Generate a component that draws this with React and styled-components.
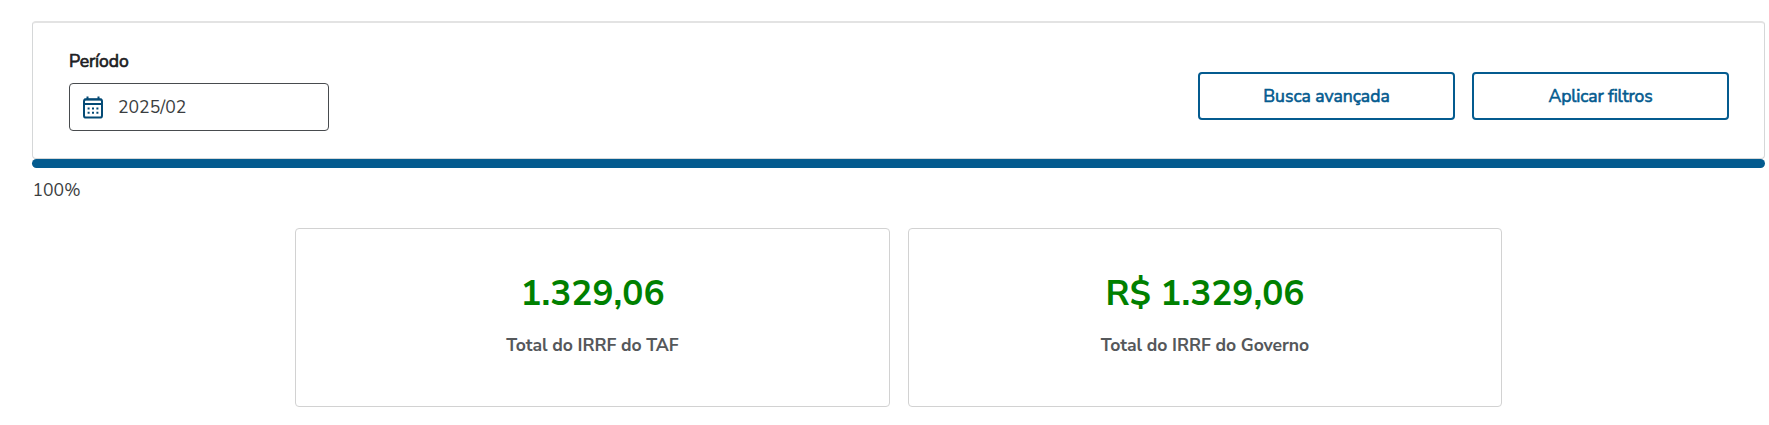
import React from "react";
import styled, { createGlobalStyle } from "styled-components";

const GlobalStyle = createGlobalStyle`
  *, *::before, *::after { box-sizing: border-box; }
  body {
    margin: 0;
    background: #fff;
    color: #3a3d40;
    font-family: "Nunito Sans", Nunito, Lato, "Open Sans", sans-serif;
    font-size: 17.6px;
    line-height: 24px;
  }
`;

const Page = styled.main`
  height: 425px;
  padding: 21px 4px 0 32px;
  overflow: hidden;
`;

const FilterPanel = styled.section`
  display: flex;
  justify-content: space-between;
  height: 138px;
  padding: 25px 35px 0 36px;
  border: 1px solid #d5d7d8;
  border-top: 2px solid #e3e3e3;
  border-radius: 4px;
`;

const Field = styled.label`
  display: flex;
  flex-direction: column;
  width: 260px;
  margin-top: -1px;
`;

const FieldLabel = styled.span`
  height: 34px;
  padding-top: 2px;
  color: #1d2023;
  letter-spacing: -0.1px;
  -webkit-text-stroke: 0.7px currentColor;
`;

const DateBox = styled.span`
  display: flex;
  align-items: center;
  gap: 15px;
  height: 48px;
  margin-top: 2px;
  padding-left: 13px;
  border: 1px solid #484b4e;
  border-radius: 4px;
`;

const DateText = styled.span`
  padding-bottom: 1px;
`;

const Actions = styled.div`
  display: flex;
  gap: 17px;
  padding-top: 24px;
`;

const Button = styled.button`
  width: 257px;
  height: 48px;
  padding: 0;
  border: 2px solid #045b8f;
  border-radius: 4px;
  background: #fff;
  color: #045b8f;
  font: inherit;
  letter-spacing: ${(p) => p.$track || "normal"};
  -webkit-text-stroke: 0.6px currentColor;
`;

const Progress = styled.div`
  height: 9px;
  border-radius: 5px;
  background: #045b8f;
`;

const ProgressText = styled.div`
  padding: 10px 0 0 0.5px;
  height: 60px;
`;

const Cards = styled.section`
  display: flex;
  gap: 18px;
  padding-left: 263px;
`;

const Card = styled.article`
  width: ${(p) => p.$width}px;
  height: 179px;
  padding-top: 40px;
  border: 1px solid #d2d2d2;
  border-radius: 4px;
  text-align: center;
`;

const Value = styled.div`
  color: #008000;
  font-size: 35.2px;
  line-height: 48px;
  font-weight: 700;
`;

const Caption = styled.div`
  margin-top: 16px;
  color: #55585b;
  font-weight: 700;
  letter-spacing: -0.06px;
`;

const CalendarIcon = () => (
  <svg width="20" height="23" viewBox="0 0 20 23" fill="none" stroke="#044a75">
    <rect x="1" y="3.2" width="18" height="18.4" rx="2.2" strokeWidth="2" />
    <path d="M1 3.6H19" strokeWidth="1.8" />
    <path d="M1 8H19" strokeWidth="2" />
    <path d="M4.5 0.5V4M15.5 0.5V4" strokeWidth="2" />
    <path
      d="M4.6 12.5h2M9 12.5h2M13.4 12.5h2M4.6 16.8h2M9 16.8h2M13.4 16.8h2"
      strokeWidth="2"
    />
  </svg>
);

export default function App() {
  return (
    <>
      <GlobalStyle />
      <Page>
        <FilterPanel>
          <Field>
            <FieldLabel>Período</FieldLabel>
            <DateBox>
              <CalendarIcon />
              <DateText>2025/02</DateText>
            </DateBox>
          </Field>
          <Actions>
            <Button>Busca avançada</Button>
            <Button $track="-0.15px">Aplicar filtros</Button>
          </Actions>
        </FilterPanel>
        <Progress />
        <ProgressText>100%</ProgressText>
        <Cards>
          <Card $width={595}>
            <Value>1.329,06</Value>
            <Caption>Total do IRRF do TAF</Caption>
          </Card>
          <Card $width={594}>
            <Value>R$ 1.329,06</Value>
            <Caption>Total do IRRF do Governo</Caption>
          </Card>
        </Cards>
      </Page>
    </>
  );
}
